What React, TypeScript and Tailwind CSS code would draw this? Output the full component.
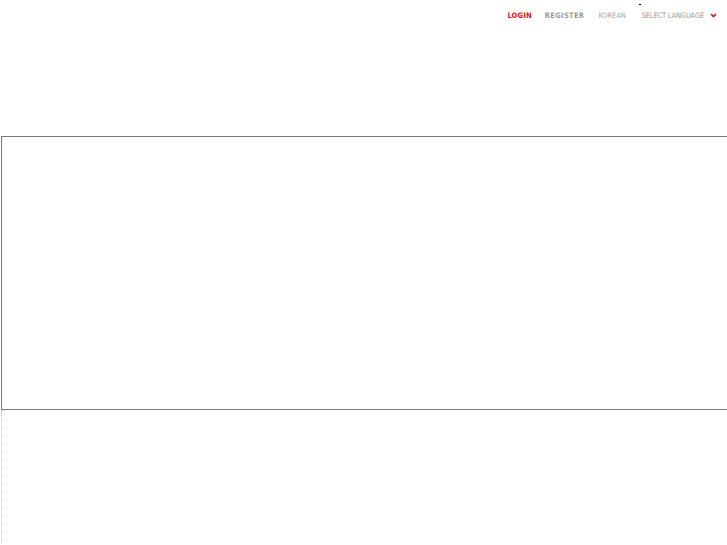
export default function App() {
  const font = { fontFamily: '"DejaVu Sans Condensed", "DejaVu Sans", "Liberation Sans", sans-serif' };
  return (
    <div className="w-[727px] h-[545px] overflow-hidden bg-white" style={font}>
      {/* top */}
      <div className="h-[136px]">
        <div className="flex items-center justify-end h-[30px] pt-[1px] pr-[10px] text-[7.5px] uppercase">
          <a className="font-bold text-[#e01010] tracking-[0.2px] mr-[13px]">Login</a>
          <a className="font-bold text-[#9a9a9a] tracking-[0.3px] mr-[14px]">Register</a>
          <a className="text-[#a8a8a8] tracking-[-0.1px] mr-[16px]">Korean</a>
          <div className="relative flex items-center text-[#9a9a9a]">
            <span className="absolute left-[-3px] top-[-6px] w-[2px] h-[1px] bg-black" />
            <span className="tracking-[-0.2px]">Select Language</span>
            <svg width="7" height="5" viewBox="0 0 7 5" className="ml-[6px]">
              <path d="M1 1 L3.5 3.5 L6 1" stroke="#e01010" strokeWidth="1.6" fill="none" />
            </svg>
          </div>
        </div>
      </div>
      {/* banner */}
      <div className="ml-[1px] w-[800px] h-[274px] border border-[#7d7d7d]" />
      {/* body */}
      <div className="ml-[1px] h-[136px] border-l border-dotted border-[#c8c8c8]" />
    </div>
  );
}
